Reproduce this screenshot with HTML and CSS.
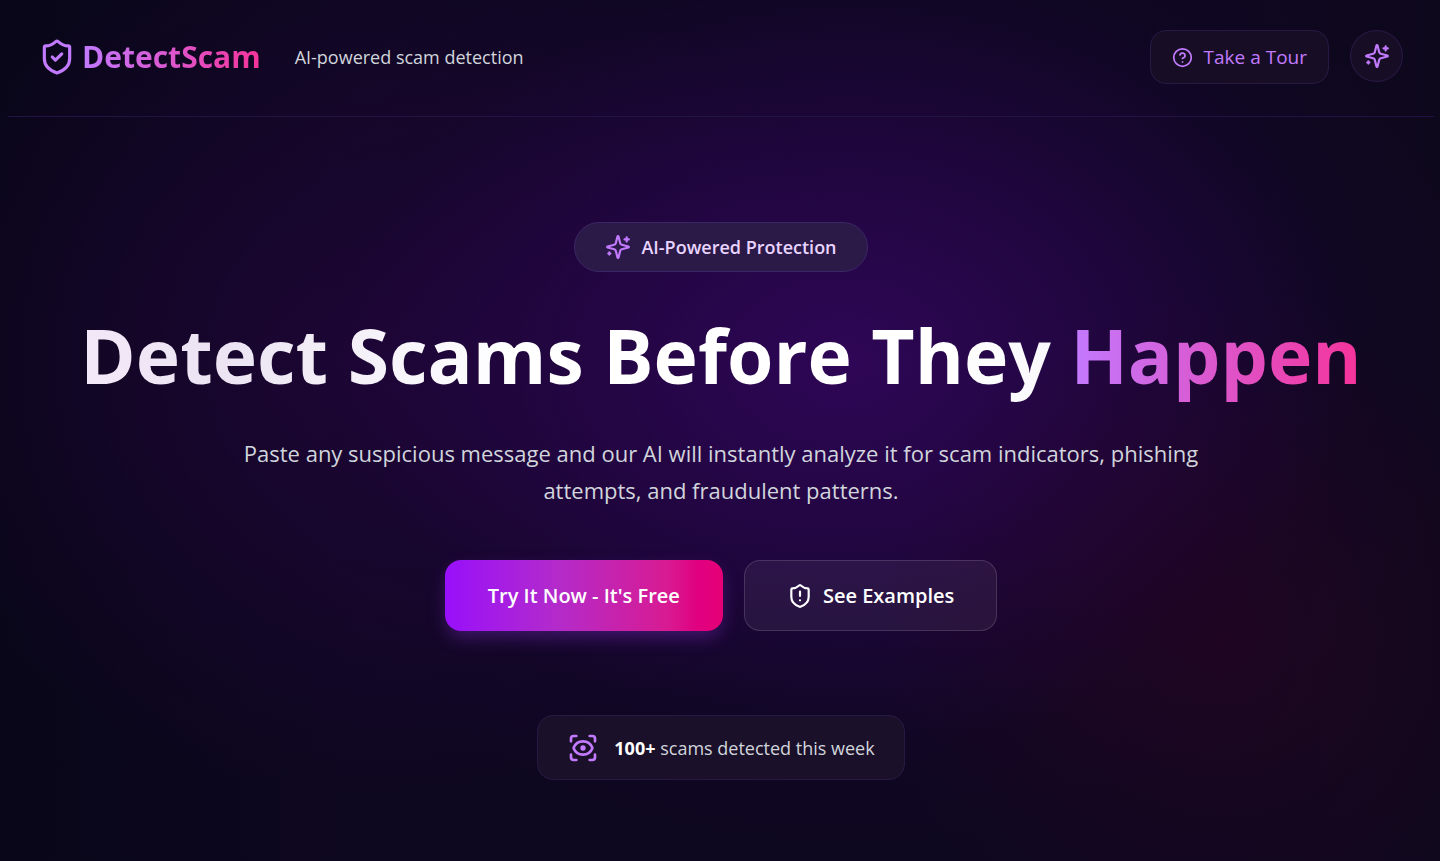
FILE: index.html
```html
<!DOCTYPE html>
<html lang="en">
<head>
<meta charset="utf-8">
<meta name="viewport" content="width=device-width, initial-scale=1">
<title>DetectScam</title>
<link rel="stylesheet" href="styles.css">
</head>
<body>
<svg class="sprite" aria-hidden="true">
  <symbol id="sparkles" viewBox="0 0 24 24">
    <path d="M9.937 15.5A2 2 0 0 0 8.5 14.063l-6.135-1.582a.5.5 0 0 1 0-.962L8.5 9.936A2 2 0 0 0 9.937 8.5l1.582-6.135a.5.5 0 0 1 .963 0L14.063 8.5A2 2 0 0 0 15.5 9.937l6.135 1.581a.5.5 0 0 1 0 .964L15.5 14.063a2 2 0 0 0-1.437 1.437l-1.582 6.135a.5.5 0 0 1-.963 0z"/>
    <path d="M20 3v4M22 5h-4M4 17v2M5 18H3"/>
  </symbol>
  <symbol id="shield" viewBox="0 0 24 24">
    <path d="M20 13c0 5-3.500 7.500-7.660 8.950a1 1 0 0 1-.670-.010C7.500 20.500 4 18 4 13V6a1 1 0 0 1 1-1c2 0 4.500-1.200 6.240-2.720a1.170 1.170 0 0 1 1.520 0C14.510 3.810 17 5 19 5a1 1 0 0 1 1 1z"/>
  </symbol>
</svg>
<header class="header">
  <div class="brand">
    <a class="logo" href="#">
      <svg class="icon icon-logo" viewBox="0 0 24 24" aria-hidden="true"><use href="#shield"/><path d="m9 12 2 2 4-4"/></svg>
      <span class="logo-name">DetectScam</span>
    </a>
    <span class="tagline">AI-powered scam detection</span>
  </div>
  <div class="actions">
    <button class="tour" type="button">
      <svg class="icon icon-help" viewBox="0 0 24 24" aria-hidden="true"><circle cx="12" cy="12" r="10"/><path d="M9.090 9a3 3 0 0 1 5.830 1c0 2-3 3-3 3M12 17h.01"/></svg>
      Take a Tour
    </button>
    <button class="theme" type="button" aria-label="Effects">
      <svg class="icon icon-spark" aria-hidden="true"><use href="#sparkles"/></svg>
    </button>
  </div>
</header>
<main class="hero">
  <div class="badge">
    <svg class="icon icon-spark" aria-hidden="true"><use href="#sparkles"/></svg>
    <span>AI-Powered Protection</span>
  </div>
  <h1 class="title"><span class="title-main">Detect Scams Before They</span> <span class="title-accent">Happen</span></h1>
  <p class="lead">Paste any suspicious message and our AI will instantly analyze it for scam indicators, phishing attempts, and fraudulent patterns.</p>
  <div class="cta">
    <button class="btn btn-primary" type="button">Try It Now - It's Free</button>
    <button class="btn btn-secondary" type="button">
      <svg class="icon icon-alert" viewBox="0 0 24 24" aria-hidden="true"><use href="#shield"/><path d="M12 8v4M12 16h.01"/></svg>
      See Examples
    </button>
  </div>
  <div class="stat">
    <svg class="icon icon-scan" viewBox="0 0 24 24" aria-hidden="true"><path d="M3 7V5a2 2 0 0 1 2-2h2M17 3h2a2 2 0 0 1 2 2v2M21 17v2a2 2 0 0 1-2 2h-2M7 21H5a2 2 0 0 1-2-2v-2"/><circle cx="12" cy="12" r="1"/><path d="M18.944 12.330a1 1 0 0 0 0-.660 7.500 7.500 0 0 0-13.888 0 1 1 0 0 0 0 .660 7.500 7.500 0 0 0 13.888 0"/></svg>
    <span><strong>100+</strong> scams detected this week</span>
  </div>
</main>
</body>
</html>
```
FILE: styles.css
```css
* {
  box-sizing: border-box;
}

body {
  margin: 0;
  min-height: 100vh;
  padding: 0 6px 0 8px;
  font-family: "Open Sans", "Noto Sans", sans-serif;
  color: #d1d5dc;
  background:
    radial-gradient(ellipse 24% 40% at 85% 74%, rgba(46, 4, 32, 0.5), transparent),
    radial-gradient(ellipse 44% 56% at 59% 42%, rgba(50, 6, 92, 0.9), rgba(42, 5, 80, 0.65) 40%, rgba(24, 5, 50, 0.2) 80%, transparent),
    radial-gradient(ellipse 34% 50% at 26% 42%, rgba(36, 5, 62, 0.7), transparent),
    linear-gradient(90deg, #090619, #0e0720 25%, #0e0720 85%, #0e081d);
}

button {
  font: inherit;
  cursor: pointer;
}

.sprite {
  position: absolute;
  width: 0;
  height: 0;
}

.icon {
  flex: none;
  fill: none;
  stroke: currentColor;
  stroke-width: 2;
  stroke-linecap: round;
  stroke-linejoin: round;
  color: #c27aff;
}

.icon-logo { width: 38px; height: 38px; }
.icon-help { width: 21px; height: 21px; }
.icon-spark { width: 26px; height: 26px; }
.icon-alert { width: 26px; height: 26px; color: #fff; }
.icon-scan { width: 32px; height: 32px; }

.header {
  display: flex;
  justify-content: space-between;
  align-items: flex-start;
  padding: 30px 31px 32px 30px;
  border-bottom: 1px solid #211344;
}

.brand,
.logo,
.actions,
.tour,
.theme,
.badge,
.cta,
.btn,
.stat {
  display: flex;
  align-items: center;
}

.brand {
  gap: 34px;
  height: 54px;
}

.logo {
  gap: 6px;
  text-decoration: none;
}

.logo-name {
  font-size: 30px;
  line-height: 40px;
  font-weight: 700;
  color: transparent;
  background: linear-gradient(90deg, #c27aff, #f6339a);
  background-clip: text;
}

.tagline {
  font-size: 18px;
  line-height: 28px;
}

.actions {
  gap: 21px;
  align-items: flex-start;
}

.tour {
  gap: 11px;
  height: 54px;
  padding: 0 21px;
  border: 1px solid #281944;
  border-radius: 16px;
  background: #170e26;
  color: #c27aff;
  font-size: 19px;
}

.theme {
  justify-content: center;
  width: 53px;
  height: 52px;
  padding: 0;
  border: 1px solid #281944;
  border-radius: 50%;
  background: #170e26;
}

.hero {
  display: flex;
  flex-direction: column;
  align-items: center;
  padding: 105px 0 80px;
  text-align: center;
}

.badge {
  gap: 10px;
  height: 50px;
  padding: 0 30px;
  border: 1px solid #3b2765;
  border-radius: 25px;
  background: #2b1a48;
  color: #e9d4ff;
  font-size: 18px;
  font-weight: 600;
}

.title {
  margin: 30px 0 0;
  font-size: 75px;
  line-height: 106px;
  font-weight: 700;
}

.title-main {
  color: transparent;
  background: linear-gradient(90deg, #f3e8f8, #ece4f3 15%, #fff 45%, #fff 90%, #f9f7fb);
  background-clip: text;
}

.title-accent {
  color: transparent;
  background: linear-gradient(90deg, #c27aff, #f6339a);
  background-clip: text;
}

.lead {
  max-width: 1000px;
  margin: 27px 0 51px;
  font-size: 22px;
  line-height: 37px;
}

.cta {
  gap: 21px;
}

.btn {
  height: 71px;
  padding: 0 43px;
  border: 0;
  border-radius: 16px;
  color: #fff;
  font-size: 20px;
  font-weight: 600;
}

.btn-primary {
  background: linear-gradient(90deg, #9810fa, #b32bcb 40%, #d81b92 80%, #e00080 91%, #e60076);
  box-shadow: 0 8px 18px -2px rgba(122, 40, 190, 0.45);
}

.btn-secondary {
  gap: 10px;
  padding: 0 42px;
  border: 1px solid rgba(255, 255, 255, 0.14);
  background: rgba(255, 255, 255, 0.06);
}

.stat {
  gap: 15px;
  height: 65px;
  margin-top: 84px;
  padding: 0 29px;
  border: 1px solid #281944;
  border-radius: 16px;
  background: #1b1029;
  font-size: 18px;
}

.stat strong {
  color: #fff;
}
```
